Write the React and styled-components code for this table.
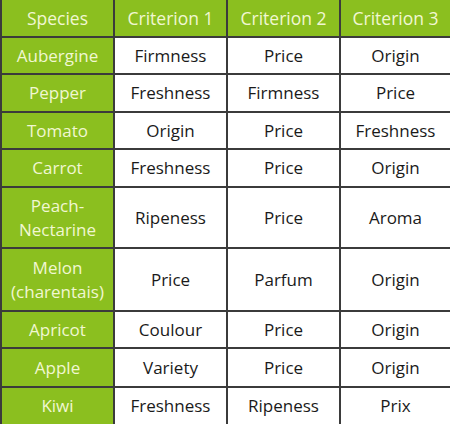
import React from 'react'
import styled, { createGlobalStyle } from 'styled-components'

const Global = createGlobalStyle`
  html, body {
    margin: 0;
    padding: 0;
    background: #ffffff;
  }
`

const Grid = styled.div`
  display: grid;
  grid-template-columns: 111px 111px 111px 1fr;
  grid-template-rows: 36px 35px 36px 35px 36px 59px 61px 35px 37px 36px;
  gap: 2px;
  padding-left: 2px;
  width: 448px;
  height: 424px;
  background: #3b3b3b;
  font-family: 'Open Sans', 'Noto Sans', sans-serif;
  font-size: 17px;
`

const Cell = styled.div`
  display: flex;
  align-items: center;
  justify-content: center;
  text-align: center;
  line-height: 24px;
  white-space: nowrap;
  background: ${p => (p.green ? '#8bbf1f' : '#ffffff')};
  color: ${p => (p.green ? '#f1f7d2' : '#1a1a1a')};
  font-size: ${p => (p.head ? '17.5px' : '17px')};
`

const header = ['Species', 'Criterion 1', 'Criterion 2', 'Criterion 3']

const rows = [
  ['Aubergine', 'Firmness', 'Price', 'Origin'],
  ['Pepper', 'Freshness', 'Firmness', 'Price'],
  ['Tomato', 'Origin', 'Price', 'Freshness'],
  ['Carrot', 'Freshness', 'Price', 'Origin'],
  [<>Peach-<br />Nectarine</>, 'Ripeness', 'Price', 'Aroma'],
  [<>Melon<br />(charentais)</>, 'Price', 'Parfum', 'Origin'],
  ['Apricot', 'Coulour', 'Price', 'Origin'],
  ['Apple', 'Variety', 'Price', 'Origin'],
  ['Kiwi', 'Freshness', 'Ripeness', 'Prix'],
]

export default function App() {
  return (
    <>
      <Global />
      <Grid>
        {header.map(h => (
          <Cell green head key={h}>{h}</Cell>
        ))}
        {rows.map((r, i) =>
          r.map((c, j) => (
            <Cell green={j === 0} key={i + '-' + j}>{c}</Cell>
          ))
        )}
      </Grid>
    </>
  )
}
